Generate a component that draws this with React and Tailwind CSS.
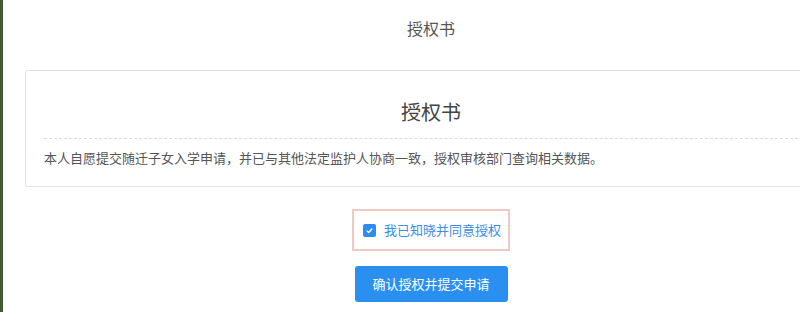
import { useState } from "react";

const App = () => {
  let [agree, setAgree] = useState(true);

  return (
    <div
      className="w-[800px] h-[312px] overflow-hidden flex bg-white"
      style={{ fontFamily: '"Noto Sans CJK SC", "Noto Sans", sans-serif' }}
    >
      <div className="w-[3px] shrink-0 bg-[#3f5a34]"></div>
      <div className="w-[856px] shrink-0 flex flex-col items-center">
        <div className="h-[70px] w-full flex justify-center pt-[18px]">
          <h4 className="text-[16px] leading-[20px] text-[#555]">授权书</h4>
        </div>
        <div className="w-[812px] border border-[#e3e3e3] rounded-[2px] px-[18px]">
          <h2 className="mt-[27px] mb-[12px] text-[20px] leading-[28px] text-[#444] text-center">
            授权书
          </h2>
          <div className="border-t border-dashed border-[#dcdcdc]"></div>
          <p className="pt-[9px] pb-[18px] text-[13px] leading-[20px] text-[#555]">
            本人自愿提交随迁子女入学申请，并已与其他法定监护人协商一致，授权审核部门查询相关数据。
          </p>
        </div>
        <div className="mt-[22px] w-[158px] h-[42px] border-2 border-[#efc9c3] flex items-center pl-[9px] gap-[8px]">
          <button
            className={
              "w-[13px] h-[13px] rounded-[2px] flex items-center justify-center " +
              (agree ? "bg-[#2d8cf0]" : "bg-white border border-[#c0c4cc]")
            }
            onClick={() => setAgree(!agree)}
          >
            {agree && (
              <svg width="9" height="9" viewBox="0 0 10 10">
                <path d="M2 5.2 L4.2 7.2 L8 2.8" fill="none" stroke="white" strokeWidth="1.6" />
              </svg>
            )}
          </button>
          <span className="text-[13px] leading-[16px] text-[#3a8ee6]">我已知晓并同意授权</span>
        </div>
        <button className="mt-[15px] w-[153px] h-[36px] rounded-[3px] bg-[#2b8ff0] text-white text-[13px]">
          确认授权并提交申请
        </button>
      </div>
    </div>
  );
};

export default App;
